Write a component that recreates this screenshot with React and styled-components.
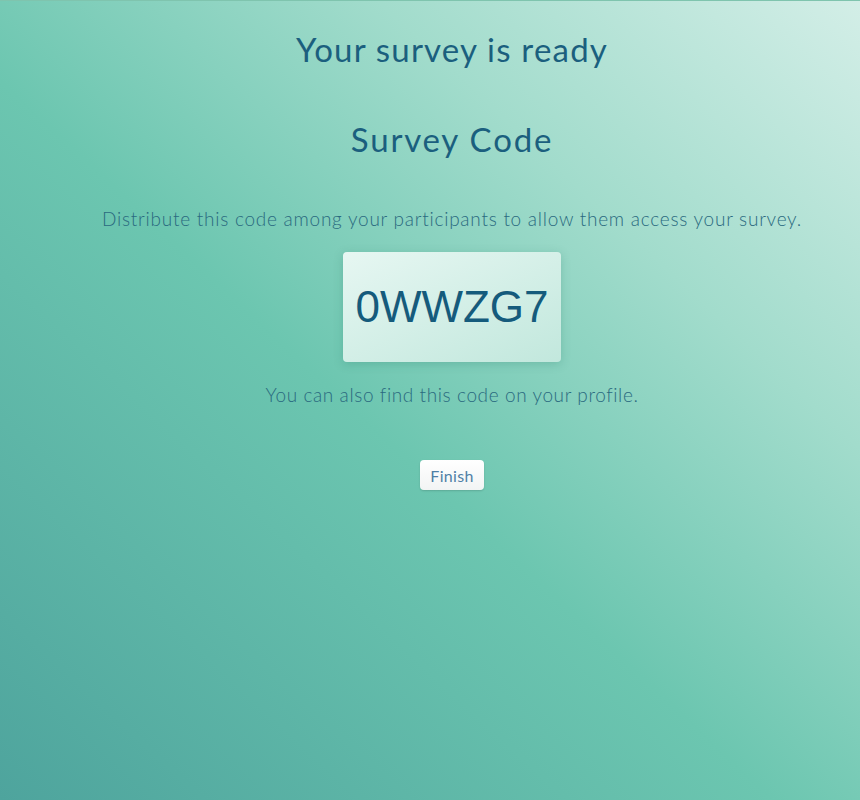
import React from 'react'
import styled, { createGlobalStyle } from 'styled-components'

const GlobalStyle = createGlobalStyle`
  html, body {
    margin: 0;
    padding: 0;
    height: 100%;
  }
  body {
    font-family: Lato, "Open Sans", sans-serif;
  }
`

const Page = styled.div`
  width: 860px;
  height: 800px;
  box-sizing: border-box;
  border-top: 1px solid #7fc4ae;
  background: linear-gradient(to top right, #4ea49d 0%, #6cc6b0 45%, #a2dccc 72%, #d3eee7 100%);
  display: flex;
  flex-direction: column;
  align-items: center;
  padding-left: 44px;
  padding-top: 28px;
  color: #1b5f7e;
`

const Title = styled.h1`
  margin: 0;
  font-size: 33px;
  font-weight: 400;
  letter-spacing: 1.2px;
`

const SubTitle = styled.h2`
  margin: 50px 0 0;
  font-size: 33px;
  font-weight: 400;
  letter-spacing: 1.8px;
`

const Text = styled.p`
  margin: ${p => p.$top || 0}px 0 0;
  font-size: 19px;
  font-weight: 300;
  letter-spacing: ${p => p.$spacing || 0.75}px;
  color: #2a6a80;
`

const CodeBox = styled.div`
  margin-top: 22px;
  width: 218px;
  height: 110px;
  box-sizing: border-box;
  display: flex;
  align-items: center;
  justify-content: center;
  border-radius: 4px;
  background: linear-gradient(to bottom right, rgba(236, 249, 245, 0.95), rgba(200, 234, 224, 0.9));
  box-shadow: 0 2px 10px rgba(40, 120, 100, 0.25);
  font-family: "Liberation Sans", Arial, sans-serif;
  font-size: 44px;
  color: #155b7c;
`

const FinishButton = styled.button`
  margin-top: 54px;
  padding: 0 10px;
  height: 30px;
  border: none;
  border-radius: 4px;
  background: linear-gradient(#ffffff, #f2f4f4);
  box-shadow: 0 1px 2px rgba(0, 0, 0, 0.15);
  font-family: Lato, sans-serif;
  font-size: 16px;
  font-weight: 400;
  letter-spacing: 0.3px;
  color: #4f7fa6;
  cursor: pointer;
`

export default function App() {
  return (
    <>
      <GlobalStyle />
      <Page>
        <Title>Your survey is ready</Title>
        <SubTitle>Survey Code</SubTitle>
        <Text $top={48}>Distribute this code among your participants to allow them access your survey.</Text>
        <CodeBox>0WWZG7</CodeBox>
        <Text $top={21} $spacing={0.6}>You can also find this code on your profile.</Text>
        <FinishButton>Finish</FinishButton>
      </Page>
    </>
  )
}
